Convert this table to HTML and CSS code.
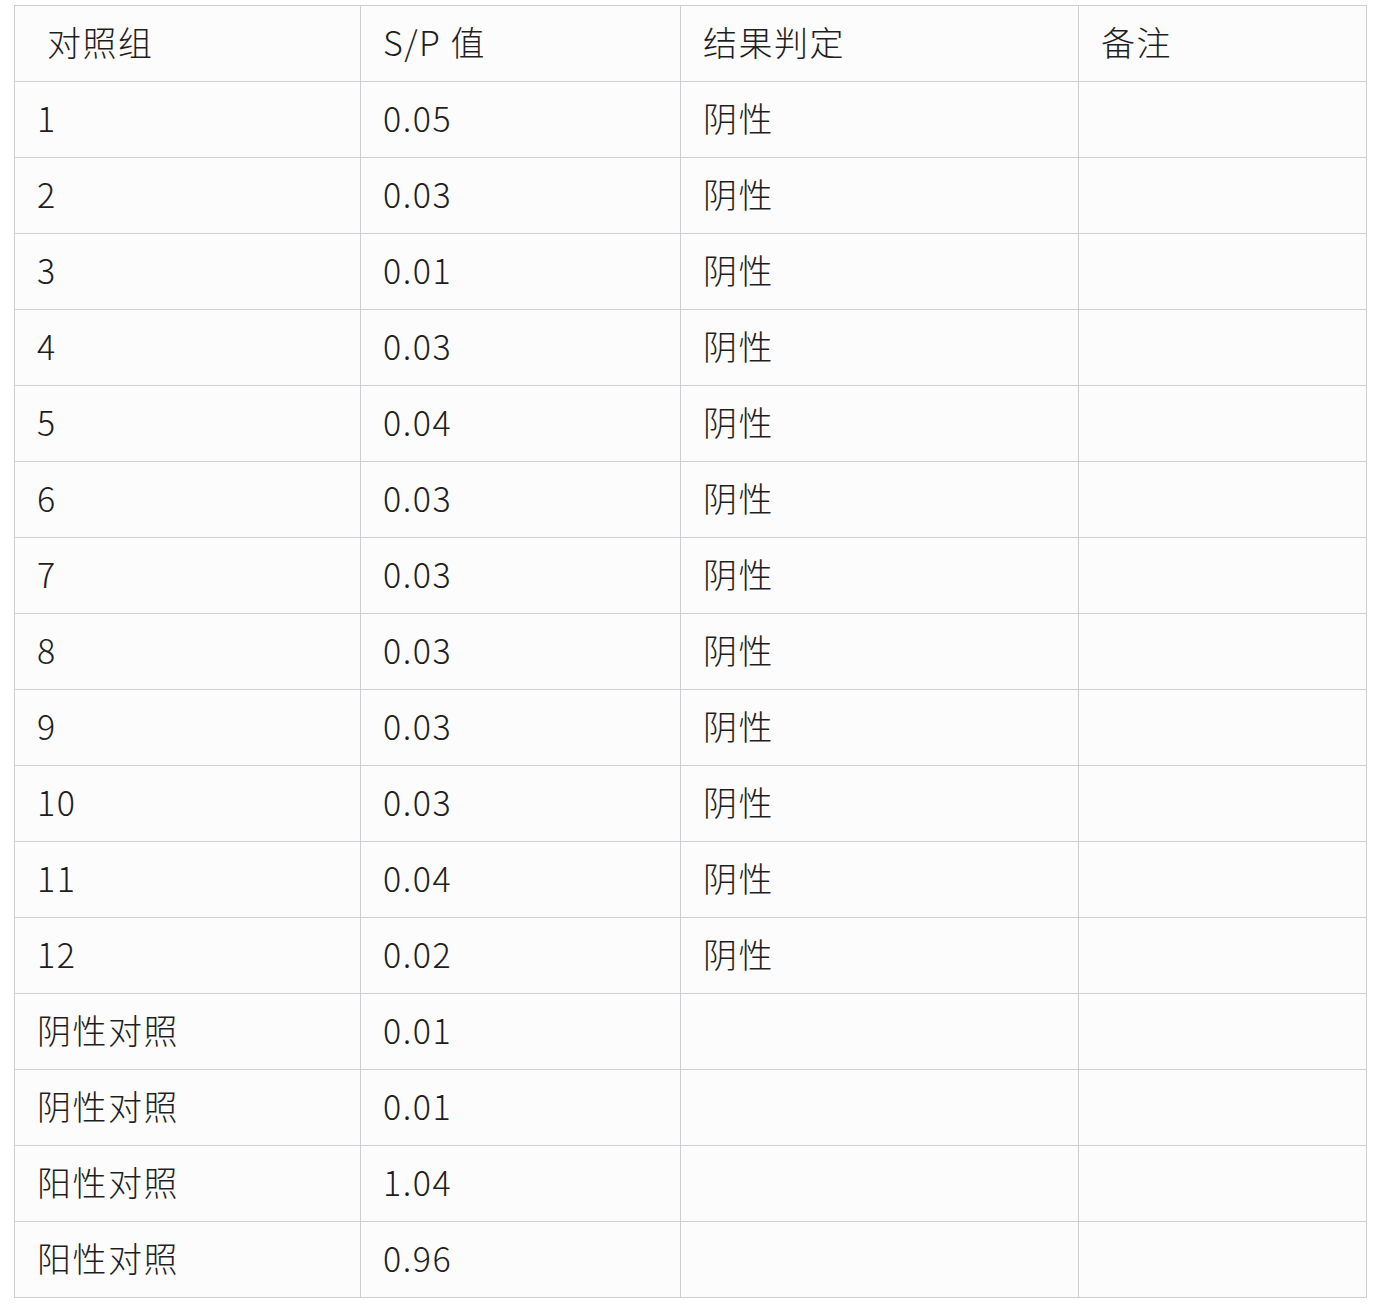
FILE: index.html
```html
<!DOCTYPE html>
<html lang="zh">
<head>
<meta charset="utf-8">
<link rel="stylesheet" href="styles.css">
</head>
<body>
<table class="grid">
<colgroup>
<col class="c1"><col class="c2"><col class="c3"><col class="c4">
</colgroup>
<thead>
<tr><th class="first">对照组</th><th>S/P 值</th><th>结果判定</th><th>备注</th></tr>
</thead>
<tbody>
<tr><td>1</td><td>0.05</td><td>阴性</td><td></td></tr>
<tr><td>2</td><td>0.03</td><td>阴性</td><td></td></tr>
<tr><td>3</td><td>0.01</td><td>阴性</td><td></td></tr>
<tr><td>4</td><td>0.03</td><td>阴性</td><td></td></tr>
<tr><td>5</td><td>0.04</td><td>阴性</td><td></td></tr>
<tr><td>6</td><td>0.03</td><td>阴性</td><td></td></tr>
<tr><td>7</td><td>0.03</td><td>阴性</td><td></td></tr>
<tr><td>8</td><td>0.03</td><td>阴性</td><td></td></tr>
<tr><td>9</td><td>0.03</td><td>阴性</td><td></td></tr>
<tr><td>10</td><td>0.03</td><td>阴性</td><td></td></tr>
<tr><td>11</td><td>0.04</td><td>阴性</td><td></td></tr>
<tr><td>12</td><td>0.02</td><td>阴性</td><td></td></tr>
<tr><td>阴性对照</td><td>0.01</td><td></td><td></td></tr>
<tr><td>阴性对照</td><td>0.01</td><td></td><td></td></tr>
<tr><td>阳性对照</td><td>1.04</td><td></td><td></td></tr>
<tr><td>阳性对照</td><td>0.96</td><td></td><td></td></tr>
</tbody>
</table>
</body>
</html>
```
FILE: styles.css
```css
html, body {
  margin: 0;
  background: #ffffff;
}
body {
  padding: 5px 0 0 14px;
}
.grid {
  border-collapse: collapse;
  table-layout: fixed;
  width: 1352px;
  background: #fcfcfd;
  font-family: "Noto Sans CJK SC", "Noto Sans", sans-serif;
  font-size: 34px;
  font-weight: 300;
  color: #1e1e1e;
  letter-spacing: 1.5px;
}
.c1 { width: 346px; }
.c2 { width: 320px; }
.c3 { width: 398px; }
.c4 { width: 288px; }
.grid th, .grid td {
  border: 1px solid #cfcfd3;
  height: 76px;
  box-sizing: border-box;
  padding: 0 22px 4px 22px;
  text-align: left;
  font-weight: 300;
  vertical-align: middle;
  line-height: 1;
  white-space: nowrap;
}
.grid th.first {
  padding-left: 32px;
}
```
